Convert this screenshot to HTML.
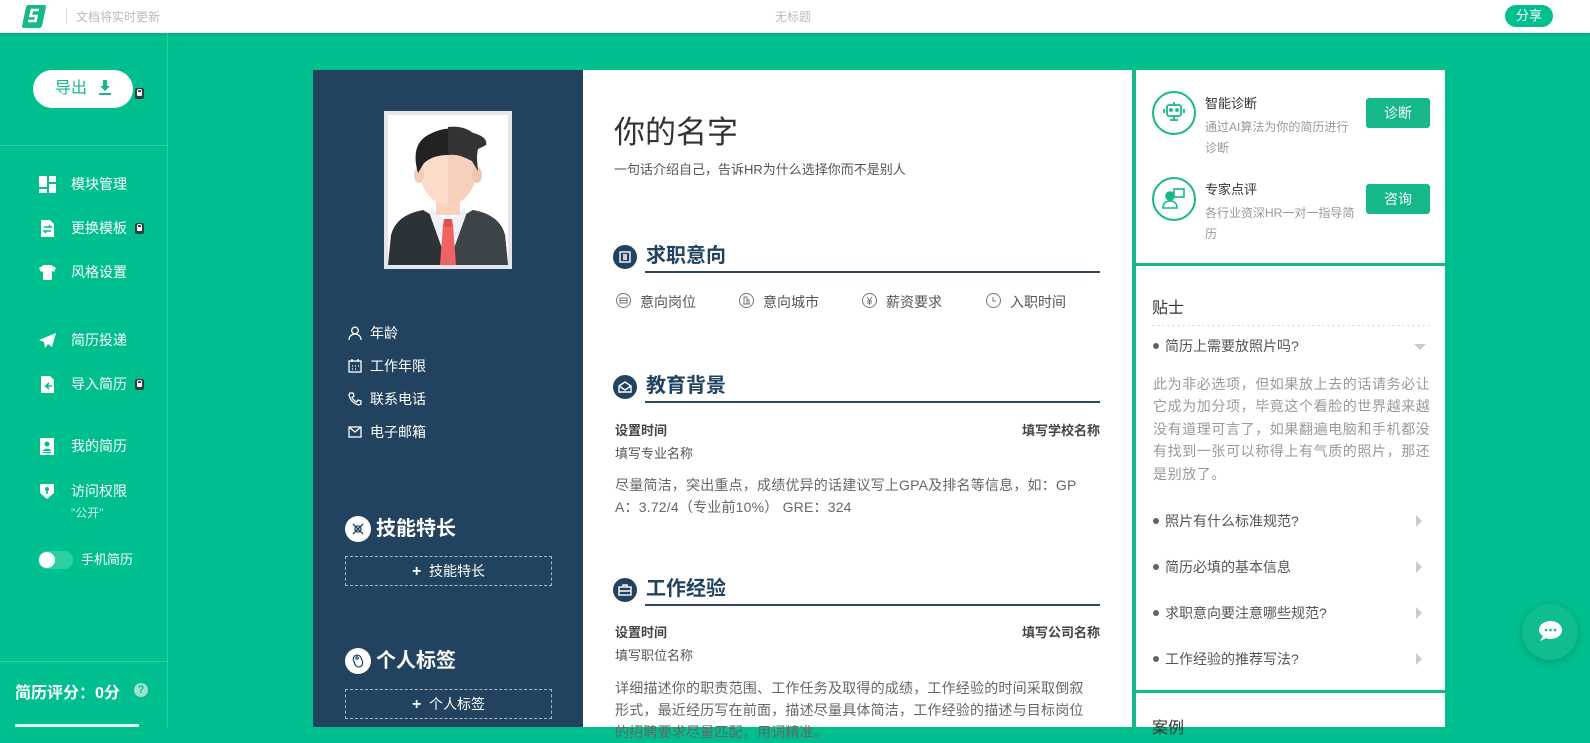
<!DOCTYPE html>
<html><head><meta charset="utf-8"><style>
*{margin:0;padding:0;box-sizing:border-box}
body{width:1590px;height:727px;overflow:hidden;background:#00bf8f;font-family:"Liberation Sans","Noto Sans CJK SC",sans-serif;position:relative}
.a{position:absolute;white-space:nowrap}
.top{position:absolute;left:0;top:0;width:1590px;height:33px;background:#fff;box-shadow:0 1px 3px rgba(0,0,0,.15)}
.side{position:absolute;left:0;top:33px;width:168px;height:694px;border-right:1px solid #2fcc9f}
.mi{position:absolute;left:71px;color:#fff;font-size:14px;line-height:20px;white-space:nowrap}
.ic{position:absolute;left:39px;width:17px;height:17px}
.lock{display:inline-block;width:9px;height:11px;background:#2d3e40;border-radius:2px;margin-left:8px;vertical-align:-1px;position:relative}
.lock:after{content:"";position:absolute;left:2px;top:4px;width:5px;height:4px;background:#fff;border-radius:1px}
.lock:before{content:"";position:absolute;left:2px;top:1px;width:3px;height:3px;border:1px solid #fff;border-bottom:none;border-radius:2px 2px 0 0}
.dark{position:absolute;left:313px;top:70px;width:270px;height:657px;background:#21435f}
.paper{position:absolute;left:583px;top:70px;width:550px;height:657px;background:#fff}
.panel{position:absolute;left:1135px;top:70px;width:310px;height:657px;background:#fff}
.sh{position:absolute;left:645px;width:455px;height:30px;border-bottom:2px solid #2b4860}
.sh .c{position:absolute;left:-32px;top:2px;width:24px;height:24px;border-radius:50%;background:#21435f}
.sh .n{position:absolute;left:1px;top:0;font-size:20px;font-weight:bold;color:#21435f;line-height:26px;white-space:nowrap}
.lt{position:absolute;left:348px;width:200px;height:20px;color:#fff;font-size:14px;line-height:20px;white-space:nowrap}
.lt svg{position:absolute;left:0;top:3px}
.lt span{position:absolute;left:22px;top:0}
.ls{position:absolute;left:345px;width:207px;height:26px}
.ls .c{position:absolute;left:0;top:0;width:26px;height:26px;border-radius:50%;background:#fff}
.ls .n{position:absolute;left:31px;top:0;color:#fff;font-weight:bold;font-size:20px;line-height:26px;white-space:nowrap}
.box{position:absolute;left:345px;width:207px;height:30px;border:1px dashed #a9b6c3;color:#fff;font-size:14px;text-align:center;line-height:28px}
.q{position:absolute;left:1153px;width:280px;font-size:14px;color:#555;line-height:20px;white-space:nowrap}
.q:before{content:"";display:inline-block;width:6px;height:6px;border-radius:50%;background:#5a6470;margin-right:6px;vertical-align:2px}
.arr{position:absolute;left:1416px;width:0;height:0;border-top:6px solid transparent;border-bottom:6px solid transparent;border-left:6px solid #c5cad3}
.btn{position:absolute;left:1366px;width:64px;height:30px;background:#16b88b;border-radius:3px;color:#fff;font-size:14px;text-align:center;line-height:30px}
.p{position:absolute;left:615px;font-size:14px;color:#666;line-height:22px;white-space:nowrap;letter-spacing:0.2px}
</style></head><body>
<div class="top">
  <svg class="a" style="left:22px;top:5px" width="24" height="23" viewBox="0 0 24 23"><path d="M6 0h16q2 0 2 2l-4 19q-1 2-3 2H2q-2 0-2-2L4 2q1-2 2-2z" fill="#17b98a"/><path d="M17 5H10L8.5 11h6l-1 5H6" stroke="#fff" stroke-width="2.6" fill="none"/></svg>
  <div class="a" style="left:66px;top:9px;width:1px;height:14px;background:#ddd"></div>
  <div class="a" style="left:76px;top:8px;font-size:12px;color:#bbb">文档将实时更新</div>
  <div class="a" style="left:775px;top:8px;font-size:12px;color:#bbb">无标题</div>
  <div class="a" style="left:1505px;top:5px;width:48px;height:22px;border-radius:11px;background:#00bf8f;color:#fff;font-size:13px;text-align:center;line-height:22px">分享</div>
</div>
<div class="side">
  <div class="a" style="left:33px;top:37px;width:100px;height:38px;border-radius:19px;background:#fff;color:#17b98a;font-size:16px;line-height:38px;padding-left:22px">导出 <svg style="vertical-align:-2px;margin-left:6px" width="16" height="16" viewBox="0 0 16 16"><path d="M6 1h4v6h3l-5 5-5-5h3z M2 14h12v2H2z" fill="#17b98a"/></svg></div>
  <div class="a" style="left:135px;top:52px"><span class="lock" style="margin:0"></span></div>
  <div class="a" style="left:0;top:112px;width:168px;height:1px;background:#2fcc9f"></div>
  <svg class="ic" style="top:143px" viewBox="0 0 17 17" fill="#fff"><rect x="0" y="0" width="8" height="11"/><rect x="10" y="0" width="7" height="6"/><rect x="10" y="8" width="7" height="9"/><rect x="0" y="13" width="8" height="4"/></svg>
  <div class="mi" style="top:141px">模块管理</div>
  <svg class="ic" style="top:187px" viewBox="0 0 17 17"><path d="M2 0h9l4 4v13H2z" fill="#fff"/><path d="M5 7h7l-2-2M12 11H5l2 2" stroke="#00bf8f" stroke-width="1.5" fill="none"/></svg>
  <div class="mi" style="top:185px">更换模板<span class="lock"></span></div>
  <svg class="ic" style="top:231px" viewBox="0 0 17 17"><path d="M5 1h7l5 3-2 4-2-1v9H4V7L2 8 0 4z" fill="#fff"/></svg>
  <div class="mi" style="top:229px">风格设置</div>
  <svg class="ic" style="top:299px" viewBox="0 0 17 17"><path d="M17 1L0 8l5 2 1 6 3-4 4 3z" fill="#fff"/></svg>
  <div class="mi" style="top:297px">简历投递</div>
  <svg class="ic" style="top:343px" viewBox="0 0 17 17"><path d="M2 0h9l4 4v13H2z" fill="#fff"/><path d="M13 10H7l3-3M7 10l3 3" stroke="#00bf8f" stroke-width="1.6" fill="none"/></svg>
  <div class="mi" style="top:341px">导入简历<span class="lock"></span></div>
  <svg class="ic" style="top:405px" viewBox="0 0 17 17"><rect x="1" y="0" width="14" height="17" fill="#fff"/><circle cx="8" cy="6" r="2.5" fill="#00bf8f"/><path d="M4 13c0-3 8-3 8 0z M4 14h8v1H4z" fill="#00bf8f"/></svg>
  <div class="mi" style="top:403px">我的简历</div>
  <svg class="ic" style="top:450px" viewBox="0 0 17 17"><path d="M1 1h14v9l-7 6-7-6z" fill="#fff"/><circle cx="8" cy="6" r="2" fill="#00bf8f"/><rect x="7.2" y="7" width="1.6" height="4" fill="#00bf8f"/></svg>
  <div class="mi" style="top:448px">访问权限</div>
  <div class="a" style="left:71px;top:471px;color:#c8f2e3;font-size:12px">"公开"</div>
  <div class="a" style="left:38px;top:518px;width:35px;height:18px;border-radius:9px;background:#2bd0a3"></div>
  <div class="a" style="left:39px;top:519px;width:16px;height:16px;border-radius:50%;background:#fff"></div>
  <div class="mi" style="left:81px;top:517px;font-size:13px">手机简历</div>
  <div class="a" style="left:0;top:628px;width:168px;height:1px;background:#2fcc9f"></div>
  <div class="a" style="left:15px;top:646px;color:#fff;font-size:16px;font-weight:bold">简历评分：0分</div>
  <div class="a" style="left:134px;top:650px;width:14px;height:14px;border-radius:50%;background:#9fe3cf;color:#00bf8f;font-size:11px;font-weight:bold;text-align:center;line-height:14px">?</div>
  <div class="a" style="left:15px;top:691px;width:124px;height:3px;background:#dff5ee"></div>
</div>

<div class="dark"></div>
<div class="a" style="left:384px;top:111px;width:128px;height:158px;background:#e4e6e9"></div>
<svg class="a" style="left:388px;top:115px" width="120" height="150" viewBox="0 0 120 150">
<rect width="120" height="150" fill="#fff"/>
<path d="M0 150 L3 120 Q8 100 35 95 L60 110 L85 95 Q112 100 117 120 L120 150Z" fill="#2c3338"/>
<path d="M60 110 L85 95 Q112 100 117 120 L120 150 H60Z" fill="#3c4449"/>
<path d="M44 92 L60 110 L76 92 L78 100 L60 150 L42 100Z" fill="#eef1f5"/>
<path d="M55 110 L65 110 L68 150 L52 150Z" fill="#f06363"/>
<path d="M56 104 L64 104 L65 112 L55 112Z" fill="#e25252"/>
<rect x="48" y="78" width="24" height="22" fill="#f7d3bf"/>
<ellipse cx="60" cy="56" rx="28" ry="34" fill="#fcdcc9"/>
<path d="M60 22 V90 A28 34 0 0 0 88 56 A28 34 0 0 0 60 22Z" fill="#f7d0bb"/>
<ellipse cx="31" cy="60" rx="5" ry="8" fill="#f5ccb6"/><ellipse cx="89" cy="60" rx="5" ry="8" fill="#f0c6b0"/>
<path d="M30 58 Q22 30 40 20 Q60 8 85 18 Q100 22 98 30 L90 34 Q88 40 90 56 L84 46 Q70 38 60 40 Q45 40 36 48Z" fill="#222"/>
<path d="M60 12 Q75 10 85 18 Q100 22 98 30 L90 34 Q88 40 90 56 L84 46 Q70 38 60 40Z" fill="#333"/>
</svg>

<div class="lt" style="top:323px"><svg width="14" height="14" viewBox="0 0 14 14" fill="none" stroke="#fff" stroke-width="1.3"><circle cx="7" cy="4.5" r="3.3"/><path d="M1 14c0-4 3-6 6-6s6 2 6 6"/></svg><span>年龄</span></div>
<div class="lt" style="top:356px"><svg width="14" height="14" viewBox="0 0 14 14" fill="none" stroke="#fff" stroke-width="1.3"><rect x="1" y="2" width="12" height="11"/><path d="M4 0v3M10 0v3M4 7h1M7 7h1M10 7h1M4 10h1M7 10h1"/></svg><span>工作年限</span></div>
<div class="lt" style="top:389px"><svg width="14" height="14" viewBox="0 0 14 14" fill="none" stroke="#fff" stroke-width="1.3"><path d="M2 1l3 0 1 3-2 1.5q1.5 3 4.5 4.5L10 8l3 1v3l-2 1Q3 11 1 3z"/></svg><span>联系电话</span></div>
<div class="lt" style="top:422px"><svg width="14" height="14" viewBox="0 0 14 14" fill="none" stroke="#fff" stroke-width="1.3"><rect x="1" y="2" width="12" height="10"/><path d="M1 2l6 5 6-5"/></svg><span>电子邮箱</span></div>

<div class="ls" style="top:516px"><div class="c"><svg width="26" height="26" viewBox="0 0 26 26" fill="none" stroke="#21435f" stroke-width="1.3"><path d="M8 8l10 10M18 8L8 18"/><circle cx="13" cy="13" r="3"/></svg></div><div class="n">技能特长</div></div>
<div class="box" style="top:556px"><b style="font-size:16px">+</b>&nbsp; 技能特长</div>
<div class="ls" style="top:648px"><div class="c"><svg width="26" height="26" viewBox="0 0 26 26" fill="none" stroke="#21435f" stroke-width="1.2"><rect x="9" y="7" width="8" height="12" rx="4" transform="rotate(-20 13 13)"/><circle cx="12" cy="10" r="1.2"/></svg></div><div class="n">个人标签</div></div>
<div class="box" style="top:689px"><b style="font-size:16px">+</b>&nbsp; 个人标签</div>

<div class="paper"></div>
<div class="a" style="left:614px;top:107px;font-size:31px;color:#333">你的名字</div>
<div class="a" style="left:614px;top:159px;font-size:13px;color:#555">一句话介绍自己，告诉HR为什么选择你而不是别人</div>

<div class="sh" style="top:243px"><div class="c"><svg width="24" height="24" viewBox="0 0 24 24" fill="none" stroke="#fff" stroke-width="1.4"><rect x="7" y="7" width="10" height="10"/><path d="M10 10h4M10 12h4M10 14h4"/></svg></div><div class="n">求职意向</div></div>
<div class="a" style="left:616px;top:293px;font-size:14px;color:#555;line-height:18px">
<span class="a" style="left:0"><svg width="15" height="15" viewBox="0 0 15 15" fill="none" stroke="#777"><circle cx="7.5" cy="7.5" r="7"/><rect x="4" y="5" width="7" height="5"/><path d="M4 7.5h7"/></svg></span><span class="a" style="left:24px">意向岗位</span>
<span class="a" style="left:123px"><svg width="15" height="15" viewBox="0 0 15 15" fill="none" stroke="#777"><circle cx="7.5" cy="7.5" r="7"/><path d="M4 11h7M5 11V4h3v7M8 7h2v4"/></svg></span><span class="a" style="left:147px">意向城市</span>
<span class="a" style="left:246px"><svg width="15" height="15" viewBox="0 0 15 15" fill="none" stroke="#777"><circle cx="7.5" cy="7.5" r="7"/><path d="M5 4l2.5 3.5L10 4M7.5 7.5V12M5 8h5M5 10h5"/></svg></span><span class="a" style="left:270px">薪资要求</span>
<span class="a" style="left:370px"><svg width="15" height="15" viewBox="0 0 15 15" fill="none" stroke="#777"><circle cx="7.5" cy="7.5" r="7"/><path d="M7 4v4h3"/></svg></span><span class="a" style="left:394px">入职时间</span>
</div>

<div class="sh" style="top:373px"><div class="c"><svg width="24" height="24" viewBox="0 0 24 24" fill="none" stroke="#fff" stroke-width="1.4"><path d="M6 11l6-4 6 4v6H6z M6 11l6 4 6-4"/></svg></div><div class="n">教育背景</div></div>
<div class="a" style="left:615px;top:420px;font-size:13px;font-weight:bold;color:#444">设置时间</div>
<div class="a" style="left:1000px;top:420px;width:100px;text-align:right;font-size:13px;font-weight:bold;color:#444">填写学校名称</div>
<div class="a" style="left:615px;top:443px;font-size:13px;color:#555">填写专业名称</div>
<div class="p" style="top:474px">尽量简洁，突出重点，成绩优异的话建议写上GPA及排名等信息，如：GP<br>A：3.72/4（专业前10%） GRE：324</div>

<div class="sh" style="top:576px"><div class="c"><svg width="24" height="24" viewBox="0 0 24 24" fill="none" stroke="#fff" stroke-width="1.4"><rect x="6" y="9" width="12" height="8"/><path d="M10 9V7h4v2M6 13h12"/></svg></div><div class="n">工作经验</div></div>
<div class="a" style="left:615px;top:622px;font-size:13px;font-weight:bold;color:#444">设置时间</div>
<div class="a" style="left:1000px;top:622px;width:100px;text-align:right;font-size:13px;font-weight:bold;color:#444">填写公司名称</div>
<div class="a" style="left:615px;top:645px;font-size:13px;color:#555">填写职位名称</div>
<div class="p" style="top:677px">详细描述你的职责范围、工作任务及取得的成绩，工作经验的时间采取倒叙<br>形式，最近经历写在前面，描述尽量具体简洁，工作经验的描述与目标岗位<br>的招聘要求尽量匹配，用词精准。</div>

<div class="panel"></div>
<div class="a" style="left:1132px;top:70px;width:4px;height:657px;background:#16b88b"></div>
<div class="a" style="left:1136px;top:263px;width:309px;height:3px;background:#16b88b"></div>
<div class="a" style="left:1136px;top:690px;width:309px;height:3px;background:#16b88b"></div>

<div class="a" style="left:1152px;top:91px;width:44px;height:44px;border-radius:50%;border:2px solid #16b88b"></div>
<svg class="a" style="left:1161px;top:100px" width="26" height="26" viewBox="0 0 26 26" fill="none" stroke="#16b88b" stroke-width="1.8"><rect x="6" y="5" width="14" height="11" rx="2"/><path d="M13 2v3M3 9v4M23 9v4M9 20h8M13 16v4"/><circle cx="10" cy="10" r="1" fill="#16b88b"/><circle cx="16" cy="10" r="1" fill="#16b88b"/></svg>
<div class="a" style="left:1205px;top:93px;font-size:13px;color:#333">智能诊断</div>
<div class="a" style="left:1205px;top:117px;font-size:12px;color:#999;line-height:21px">通过AI算法为你的简历进行<br>诊断</div>
<div class="btn" style="top:98px">诊断</div>
<div class="a" style="left:1152px;top:177px;width:44px;height:44px;border-radius:50%;border:2px solid #16b88b"></div>
<svg class="a" style="left:1161px;top:186px" width="26" height="26" viewBox="0 0 26 26" fill="none" stroke="#16b88b" stroke-width="1.6"><rect x="13" y="3" width="10" height="8"/><circle cx="9" cy="10" r="4" fill="#16b88b"/><path d="M2 22c0-5 3-7 7-7s7 2 7 7z"/></svg>
<div class="a" style="left:1205px;top:179px;font-size:13px;color:#333">专家点评</div>
<div class="a" style="left:1205px;top:203px;font-size:12px;color:#999;line-height:21px">各行业资深HR一对一指导简<br>历</div>
<div class="btn" style="top:184px">咨询</div>

<div class="a" style="left:1152px;top:294px;font-size:16px;color:#333">贴士</div>
<div class="a" style="left:1152px;top:325px;width:278px;border-top:1px dashed #e2e2e2"></div>
<div class="q" style="top:336px">简历上需要放照片吗?</div>
<div class="a" style="left:1414px;top:344px;border-left:6px solid transparent;border-right:6px solid transparent;border-top:6px solid #c5cad3"></div>
<div class="a" style="left:1153px;top:373px;font-size:14px;color:#999;line-height:22.4px;white-space:normal;width:282px;letter-spacing:0.6px">此为非必选项，但如果放上去的话请务必让它成为加分项，毕竟这个看脸的世界越来越没有道理可言了，如果翻遍电脑和手机都没有找到一张可以称得上有气质的照片，那还是别放了。</div>
<div class="q" style="top:511px">照片有什么标准规范?</div><div class="arr" style="top:515px"></div>
<div class="q" style="top:557px">简历必填的基本信息</div><div class="arr" style="top:561px"></div>
<div class="q" style="top:603px">求职意向要注意哪些规范?</div><div class="arr" style="top:607px"></div>
<div class="q" style="top:649px">工作经验的推荐写法?</div><div class="arr" style="top:653px"></div>
<div class="a" style="left:1152px;top:714px;font-size:16px;color:#333">案例</div>

<div class="a" style="left:1522px;top:604px;width:56px;height:56px;border-radius:50%;background:#0fbd8e;box-shadow:0 2px 8px rgba(0,0,0,.18)"></div>
<svg class="a" style="left:1538px;top:620px" width="25" height="24" viewBox="0 0 25 24"><path d="M12.5 1C19 1 24 5 24 10s-5 9-11.5 9c-1.5 0-3 0-4-1L2 21l3-5C2 14 1 12 1 10 1 5 6 1 12.5 1z" fill="#fff"/><circle cx="8" cy="10" r="1.3" fill="#0fbd8e"/><circle cx="12.5" cy="10" r="1.3" fill="#0fbd8e"/><circle cx="17" cy="10" r="1.3" fill="#0fbd8e"/></svg>
</body></html>
